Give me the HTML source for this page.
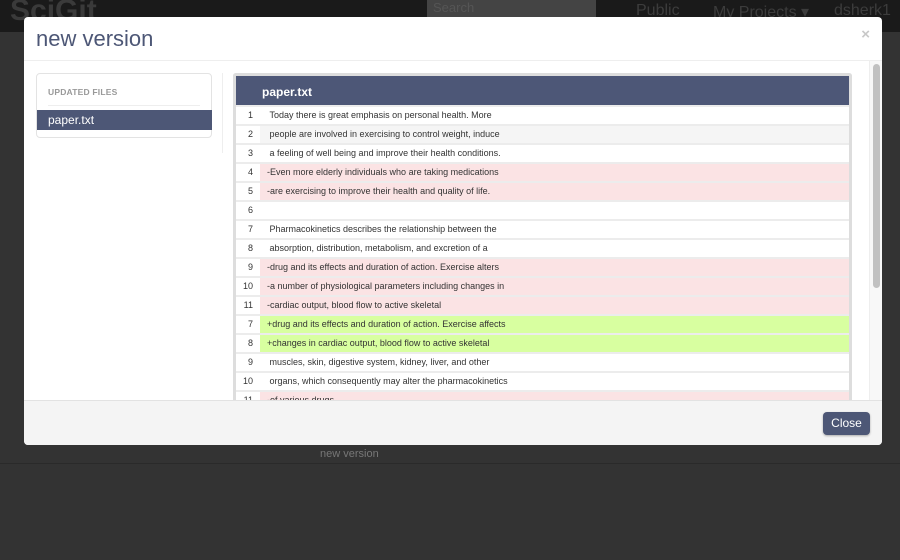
<!DOCTYPE html>
<html><head><meta charset="utf-8"><style>
*{box-sizing:border-box;margin:0;padding:0}
body{width:900px;height:560px;overflow:hidden;background:#333;font-family:"Liberation Sans",Arial,sans-serif;position:relative}
.nav{position:absolute;left:0;top:0;width:900px;height:32px;background:#1a1a1a}
.nav .logo{position:absolute;left:10px;top:-6px;font-size:30px;font-weight:bold;color:#3a3a3a}
.nav .search{position:absolute;left:427px;top:0;width:169px;height:17px;background:#444;color:#555;font-size:13px;padding-left:6px}
.nav .it{position:absolute;top:2px;color:#3c3c3c;font-size:16px}
.bg{position:absolute;left:320px;top:448px;color:#777;font-size:11px}
.bgline{position:absolute;left:0;top:463px;width:900px;height:1px;background:#2a2a2a}
.modal{position:absolute;left:24px;top:17px;width:858px;height:428px;background:#fff;border-radius:4px;overflow:hidden}
.mh{height:44px;border-bottom:1px solid #eee;position:relative}
.mh h3{position:absolute;left:12px;top:9px;font-size:22px;font-weight:normal;color:#4d5776}
.x{position:absolute;right:12px;top:9px;color:#c8c8c8;font-size:15px;font-weight:bold}
.side{position:absolute;left:12px;top:56px;width:176px;height:65px;border:1px solid #e3e3e3;border-radius:4px}
.side .t{position:absolute;left:11px;top:13px;font-size:8.5px;font-weight:bold;color:#999;letter-spacing:.2px}
.side .hr{position:absolute;left:11px;top:31px;width:152px;height:1px;background:#eee}
.side .sel{position:absolute;left:0;top:36px;width:175px;height:20px;background:#4d5776;color:#fff;font-size:12px;padding:3px 11px}
.div{position:absolute;left:198px;top:56px;width:1px;height:80px;background:#eee}
.diff{position:absolute;left:209px;top:56px;width:619px;height:340px;border:3px solid #ddd;border-bottom:none;border-radius:3px 3px 0 0;background:#eee}
.dh{height:29px;background:#4d5777;color:#fff;font-weight:bold;font-size:12px;padding:9px 26px}
.row{height:19px;border-top:2px solid #ececec;position:relative;font-size:9px;color:#333;background:#fff}
.row .n{position:absolute;left:0;top:0;width:21px;height:17px;text-align:right;padding-right:4px;line-height:17px;background:#fff}
.row .c{position:absolute;left:24px;right:0;top:0;height:17px;line-height:17px;padding-left:7px}
.r .c{background:#fbe3e4}.g .c{background:#d8ffa0}.a .c{background:#f5f5f5}
.sb{position:absolute;left:849px;top:47px;width:7px;height:224px;background:#c1c1c1;border-radius:4px}
.sbt{position:absolute;left:845px;top:44px;width:13px;height:339px;background:#f8f8f8;border-left:1px solid #eee}
.mf{position:absolute;left:0;top:383px;width:858px;height:45px;background:#f4f4f4;border-top:1px solid #e2e2e2}
.btn{position:absolute;left:799px;top:11px;width:47px;height:23px;background:#4d5776;border-radius:4px;color:#fff;font-size:12px;text-align:center;line-height:23px;box-shadow:0 1px 2px rgba(0,0,0,.3)}
</style></head><body>
<div class="nav"><div class="logo">SciGit</div><div class="search">Search</div>
<div class="it" style="left:636px">Public</div><div class="it" style="left:713px">My Projects ▾</div><div class="it" style="left:834px">dsherk1 ▾</div></div>
<div class="bg">new version</div><div class="bgline"></div>
<div class="modal">
<div class="mh"><h3>new version</h3><span class="x">×</span></div>
<div class="side"><div class="t">UPDATED FILES</div><div class="hr"></div><div class="sel">paper.txt</div></div>
<div class="div"></div>
<div class="sbt"></div><div class="sb"></div>
<div class="diff"><div class="dh">paper.txt</div>
<div class="row"><span class="n">1</span><span class="c">&nbsp;Today there is great emphasis on personal health. More</span></div>
<div class="row a"><span class="n">2</span><span class="c">&nbsp;people are involved in exercising to control weight, induce</span></div>
<div class="row"><span class="n">3</span><span class="c">&nbsp;a feeling of well being and improve their health conditions.</span></div>
<div class="row r"><span class="n">4</span><span class="c">-Even more elderly individuals who are taking medications</span></div>
<div class="row r"><span class="n">5</span><span class="c">-are exercising to improve their health and quality of life.</span></div>
<div class="row"><span class="n">6</span><span class="c"></span></div>
<div class="row"><span class="n">7</span><span class="c">&nbsp;Pharmacokinetics describes the relationship between the</span></div>
<div class="row"><span class="n">8</span><span class="c">&nbsp;absorption, distribution, metabolism, and excretion of a</span></div>
<div class="row r"><span class="n">9</span><span class="c">-drug and its effects and duration of action. Exercise alters</span></div>
<div class="row r"><span class="n">10</span><span class="c">-a number of physiological parameters including changes in</span></div>
<div class="row r"><span class="n">11</span><span class="c">-cardiac output, blood flow to active skeletal</span></div>
<div class="row g"><span class="n">7</span><span class="c">+drug and its effects and duration of action. Exercise affects</span></div>
<div class="row g"><span class="n">8</span><span class="c">+changes in cardiac output, blood flow to active skeletal</span></div>
<div class="row"><span class="n">9</span><span class="c">&nbsp;muscles, skin, digestive system, kidney, liver, and other</span></div>
<div class="row"><span class="n">10</span><span class="c">&nbsp;organs, which consequently may alter the pharmacokinetics</span></div>
<div class="row r"><span class="n">11</span><span class="c">-of various drugs</span></div>
</div>
<div class="mf"><div class="btn">Close</div></div>
</div>
</body></html>
